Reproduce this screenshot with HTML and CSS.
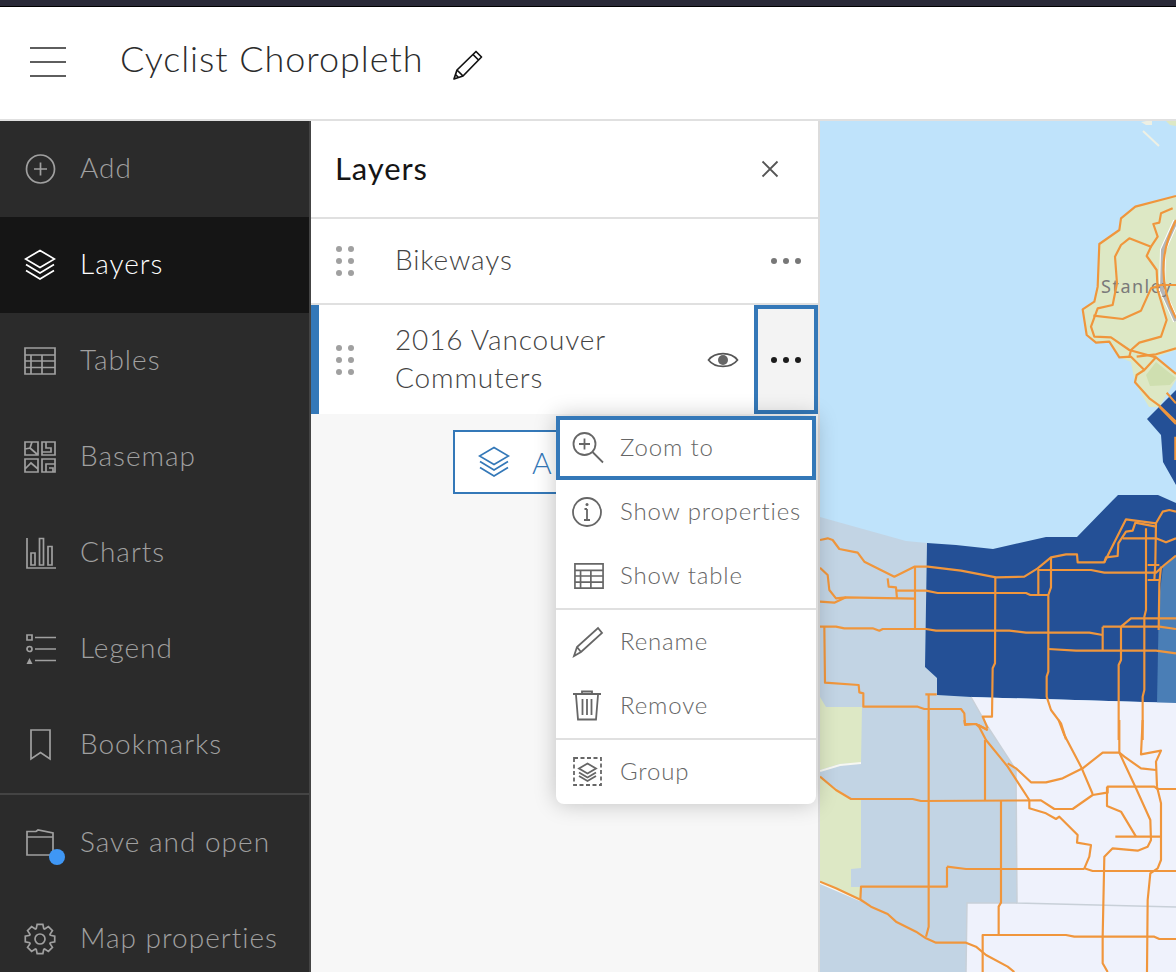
FILE: index.html
```html
<!DOCTYPE html>
<html lang="en">
<head>
<meta charset="utf-8">
<title>Cyclist Choropleth</title>
<link rel="stylesheet" href="styles.css">
</head>
<body>
<svg class="defs" width="0" height="0">
  <symbol id="i-layers" viewBox="0 0 32 32">
    <path d="M16 1.500 30.500 10 16 18.500 1.500 10Z"/>
    <path d="M2 15.500 16 24 30 15.500"/>
    <path d="M2 21.500 16 30 30 21.500"/>
  </symbol>
  <symbol id="i-table" viewBox="0 0 32 32">
    <path d="M1 3h30v26H1zM1 10h30M1 16h30M1 22.500h30M7 10v19M18 10v19"/>
  </symbol>
</svg>
<div class="topbar"></div>
<header class="header">
  <button class="menu-btn" aria-label="Menu"><span></span><span></span><span></span></button>
  <h1 class="title">Cyclist Choropleth</h1>
  <svg class="pencil" viewBox="0 0 32 32"><path d="M2 30 5 21 24 2.500 29.500 8 11 27ZM5 21 11 27M21 5.500 26.500 11M3.500 25.500 6.500 28.500"/></svg>
</header>
<div class="main">
  <nav class="sidebar">
    <a class="nav-item"><svg class="ico" viewBox="0 0 32 32"><circle cx="16.500" cy="16" r="14"/><path d="M16.500 9.500v13M10 16h13"/></svg><span class="nav-text">Add</span></a>
    <a class="nav-item active"><svg class="ico"><use href="#i-layers"/></svg><span class="nav-text">Layers</span></a>
    <a class="nav-item"><svg class="ico"><use href="#i-table"/></svg><span class="nav-text">Tables</span></a>
    <a class="nav-item"><svg class="ico" viewBox="0 0 32 32"><path d="M1 1h13v13H1zM18 1h13v13H18zM1 18h13v13H1zM18 18h13v13H18zM1 8l5-1 2-6M6 7l8 7M22 1v6h5v4h-9M1 28l6-6 7 6M22 31v-8h9M25 27h4v4"/></svg><span class="nav-text">Basemap</span></a>
    <a class="nav-item"><svg class="ico" viewBox="0 0 32 32"><path d="M3 1v30h30M7 16h4v12H7zM15.500 1.500h4V28h-4zM24 9.500h4V28h-4z"/></svg><span class="nav-text">Charts</span></a>
    <a class="nav-item"><svg class="ico" viewBox="0 0 32 32"><path d="M11 4.500h21M11 16h21M11 27.500h21M3 2h5v5H3z"/><circle cx="5.500" cy="16" r="2.500"/><path class="solid" d="M5.500 25 8.500 31H2.500Z"/></svg><span class="nav-text">Legend</span></a>
    <a class="nav-item"><svg class="ico" viewBox="0 0 32 32"><path d="M7 1h19v29l-9.500-6.500L7 30Z"/></svg><span class="nav-text">Bookmarks</span></a>
    <a class="nav-item divided"><span class="ico-wrap"><svg class="ico" viewBox="0 0 32 32"><path d="M3 4.500 12 4.500 14 3 29 6V28H3ZM3 10H29"/></svg><i class="dot"></i></span><span class="nav-text">Save and open</span></a>
    <a class="nav-item"><svg class="ico" viewBox="0 0 32 32"><polygon points="26.34,12.24 30.72,13.14 30.72,18.86 26.34,19.76 25.97,20.65 28.44,24.39 24.39,28.44 20.65,25.97 19.76,26.34 18.86,30.72 13.14,30.72 12.24,26.34 11.35,25.97 7.61,28.44 3.56,24.39 6.03,20.65 5.66,19.76 1.28,18.86 1.28,13.14 5.66,12.24 6.03,11.35 3.56,7.61 7.61,3.56 11.35,6.03 12.24,5.66 13.14,1.28 18.86,1.28 19.76,5.66 20.65,6.03 24.39,3.56 28.44,7.61 25.97,11.35"/><circle cx="16" cy="16" r="5"/></svg><span class="nav-text">Map properties</span></a>
  </nav>
  <section class="panel">
    <div class="panel-head">
      <h2 class="panel-title">Layers</h2>
      <svg class="close" viewBox="0 0 18 18"><path d="M1.500 1.500l15 15M16.500 1.500l-15 15"/></svg>
    </div>
    <div class="row">
      <span class="grip"><i></i><i></i><i></i><i></i><i></i><i></i></span>
      <span class="row-label">Bikeways</span>
      <span class="more"><i></i><i></i><i></i></span>
    </div>
    <div class="row selected">
      <span class="grip"><i></i><i></i><i></i><i></i><i></i><i></i></span>
      <span class="row-label">2016 Vancouver<br>Commuters</span>
      <svg class="eye" viewBox="0 0 32 20"><path d="M1.500 10C8 1.500 24 1.500 30.500 10 24 18.500 8 18.500 1.500 10Z"/><circle class="solid" cx="16" cy="10" r="5"/></svg>
      <span class="more focused"><i></i><i></i><i></i></span>
    </div>
    <div class="panel-body">
      <button class="add-btn"><svg class="add-ico"><use href="#i-layers"/></svg><span>A</span></button>
    </div>
    <ul class="menu">
      <li class="menu-item focus"><svg class="ico" viewBox="0 0 32 32"><circle cx="12.500" cy="12" r="11"/><path d="M12.500 6.500v11M7 12h11M20.500 20 31 30.500"/></svg><span class="menu-text">Zoom to</span></li>
      <li class="menu-item"><svg class="ico" viewBox="0 0 32 32"><circle cx="15" cy="16" r="14"/><path d="M15 13v11M12 24h6M12.500 13H15"/><circle class="solid" cx="15" cy="8.500" r="1.500"/></svg><span class="menu-text">Show properties</span></li>
      <li class="menu-item"><svg class="ico ico-table"><use href="#i-table"/></svg><span class="menu-text">Show table</span></li>
      <li class="menu-item sep"><svg class="ico" viewBox="0 0 32 32"><path d="M2 30 5 21 26 2l4 5L9 26ZM5 21l4 5"/></svg><span class="menu-text">Rename</span></li>
      <li class="menu-item"><svg class="ico" viewBox="0 0 32 32"><path d="M1 4h28M10 3V1.500h10V3M4 5l2 24.500h18L26 5M10.500 9v16M15 9v16M19.500 9v16"/></svg><span class="menu-text">Remove</span></li>
      <li class="menu-item sep"><svg class="ico" viewBox="0 0 32 32"><path class="dash" d="M2 2h27v27H2z"/><path d="M15.500 7.500 24 12.500 15.500 17.500 7 12.500ZM7 16.500l8.500 5 8.500-5M7 20l8.500 5 8.500-5"/></svg><span class="menu-text">Group</span></li>
    </ul>
  </section>
  <div class="map">
    <svg class="map-svg" viewBox="820 121 356 851" preserveAspectRatio="none">
      <polygon class="land-blue" points="820,517 906,541 927,543 925,667 937,678 937,695 971,697 988,727 1016,770 1017,903 967,903 966,972 820,972"/>
      <polygon class="park" points="826,707 862,707 861,763 840,764 820,770 820,697"/>
      <polygon class="park" points="820,777 851,799 861,800 861,868 851,869 851,887 861,887 860,900 820,882"/>
      <polyline class="shore" points="820,771 840,765 861,763"/>
      <polyline class="shore" points="820,883 860,900"/>
      <polygon class="park" points="1099,244 1119,230 1121,218 1135,207 1176,196 1176,380 1159,407 1149,407 1135,383 1131,362 1119,357 1109,342 1096,343 1087,335 1083,309 1094,302 1098,287"/>
      <polygon class="park-dark" points="1146,375 1156,362 1176,378 1170,385 1150,386"/>
      <polygon class="water" points="1156,357 1176,350 1176,373"/>
      <polygon class="park" points="1165,120 1176,120 1176,126 1170,125"/>
      <polygon class="pale" points="1141,122 1152,120 1152,125 1146,125"/>
      <polyline class="pale-line" points="1143,131 1159,146"/>
      <polyline class="road-halo" points="1176,221 1163,250 1162,290 1176,321"/>
      <polyline class="road" points="1176,221 1163,250 1162,290 1176,321"/>
      <polygon class="dark" points="927,543 956,545 993,549 1046,537 1077,537 1113,500 1118,495 1158,495 1176,503 1176,703 971,697 937,695 937,678 925,667"/>
      <polygon class="dark" points="1147,419 1176,390 1176,485 1163,462 1161,435"/>
      <polygon class="mid" points="1163,567 1176,555 1176,703 1157,703 1159,600"/>
      <polygon class="pale-land" points="971,697 988,727 1016,770 1017,903 967,903 966,972 1176,972 1176,703"/>
      <polyline class="boundary" points="971,697 988,727 1016,770 1017,903 1176,907"/>
      <polyline class="boundary" points="1017,903 967,903 966,972"/>
      <text class="map-label" x="1101" y="293">Stanley</text>
      <g transform="translate(816 120) scale(.33333)" class="bike">
        <path d="M1080,228 958,260 915,295 910,330 850,372 845,500 835,545 800,568 812,645 840,668 880,665 910,712 945,710 985,750 1020,712 1080,762"/>
        <path d="M1070,265 1035,280 1030,308 1012,312 1025,350 1005,380 940,355 915,375 897,410 903,490 890,555 845,565 825,620 835,650 885,652 940,690 1020,712"/>
        <path d="M1005,380 992,408 1022,450 1025,510 1052,600 1035,650 970,668 945,690 940,710"/>
        <path d="M832,587 920,597 975,572 1005,505 1035,495 1080,495"/>
        <path d="M962,710 1020,703 1080,685"/>
        <path d="M985,750 962,765 957,787 1000,835 1030,857 1080,905"/>
        <path d="M1052,818 1080,850M1030,860 1080,912M1078,950V1020"/>
        <path d="M1080,300C1030,400 1030,500 1080,595"/>
      </g>
      <g transform="translate(816 500) scale(.33333)" class="bike">
        <path d="M12,120 35,115 50,120 70,147 125,158 145,185 235,230 295,200 335,200 435,212 540,232 625,230 665,205 705,172 750,163 783,163 785,187 865,187 930,58 1020,70 1040,35 1060,30 1080,35"/>
        <path d="M705,172V262L697,285V515L692,530V590L705,630 735,670 750,718"/>
        <path d="M665,210H825L865,218H1020L1045,195 1080,167"/>
        <path d="M667,210V283"/>
        <path d="M215,235 218,260 240,262 243,295"/>
        <path d="M243,272H330L365,279H630L643,285H697"/>
        <path d="M12,203 35,225 40,270 60,295 90,292 295,296"/>
        <path d="M12,305 55,308 90,292"/>
        <path d="M297,200V385"/>
        <path d="M12,380H60L85,385H170L190,392 200,387H330L360,392H580L630,398H820L860,405"/>
        <path d="M25,380 27,548 128,555 130,577 142,580V620H305L325,627H435L445,640 447,675 480,672 515,690"/>
        <path d="M328,583H362M338,583V720"/>
        <path d="M538,232 537,490 530,505 528,650H500L515,685"/>
        <path d="M697,447 780,452H1020L1080,460"/>
        <path d="M860,380V450M860,380H915L945,355H1080M915,380H1030L1080,387"/>
        <path d="M915,380V480L908,495V720"/>
        <path d="M990,85V330L985,350V570L980,590V720"/>
        <path d="M1020,70 1018,190 1015,240"/>
        <path d="M1035,200 1030,250 1028,390"/>
        <path d="M995,195H1030M995,240H1030"/>
        <path d="M865,187 870,172 905,168 907,130 930,95 950,92 958,68 1020,80"/>
        <path d="M920,115H1020L1050,127 1080,115"/>
      </g>
      <g transform="translate(816 720) scale(.33333)" class="bike">
        <path d="M338,0V620L330,650"/>
        <path d="M445,0 447,12H480L490,22 510,60 555,115 575,140 640,240"/>
        <path d="M487,15 515,30"/>
        <path d="M507,60V240"/>
        <path d="M575,130 600,145 645,187H690L740,175 800,145 860,98H910L925,110 975,145 1020,150"/>
        <path d="M728,0 745,45 795,140 830,222"/>
        <path d="M910,0V98L960,205 1003,300 1005,360 995,380 965,392 890,385 865,410 860,650V730L875,756"/>
        <path d="M980,0 975,103 1035,92 1020,125 1023,200 1035,250V420L1025,445 1003,460 995,540 993,756"/>
        <path d="M12,170 60,210 105,237H290L315,243 675,241 715,267H770L830,225 873,218H875V200H1015L1025,207H1080"/>
        <path d="M873,200V258L915,275 960,350"/>
        <path d="M898,350H1035"/>
        <path d="M640,240V265L690,280 720,297 730,290 785,345 783,368 825,375 820,410 805,445 830,453H1080"/>
        <path d="M555,243V548L548,560V642"/>
        <path d="M393,440V500H135L133,540"/>
        <path d="M393,440 450,447H805"/>
        <path d="M12,485 60,505 135,540 165,560 215,582 240,605 300,635 330,655 360,668H450L480,680 510,705 575,740 595,756"/>
        <path d="M500,756V645H750L775,650H1015L1030,657H1080"/>
      </g>
    </svg>
  </div>
</div>
</body>
</html>
```
FILE: styles.css
```css
* { box-sizing: border-box; }
html, body { margin: 0; height: 972px; overflow: hidden; }
body { font-family: "Lato", "Noto Sans", sans-serif; background: #fff; }
.defs { position: absolute; }
.topbar { height: 7px; background: #2a2a38; border-bottom: 1px solid #000; }
.header { height: 112px; background: #fff; display: flex; align-items: center; padding-left: 30px; }
.menu-btn { width: 36px; height: 30px; padding: 0; border: 0; background: none; display: flex; flex-direction: column; justify-content: space-between; margin: 0 54px 2px 0; flex: none; }
.menu-btn span { display: block; height: 2px; background: #5e5e5e; }
.title { margin: 0 0 10px; font-size: 36px; font-weight: 300; letter-spacing: .95px; color: #2c2c2c; line-height: 44px; }
.pencil { width: 32px; height: 32px; margin: 3px 0 0 29px; fill: none; stroke: #111; stroke-width: 1.7; stroke-linejoin: round; }
.main { display: flex; height: 853px; border-top: 2px solid #e0e0e0; }
.sidebar { width: 311px; flex: none; height: 851px; background: #2b2b2b; border-right: 2px solid #444; overflow: hidden; }
.nav-item { display: flex; align-items: center; height: 96px; padding-left: 24px; gap: 25px; color: #a0a0a0; font-size: 28px; font-weight: 300; letter-spacing: 1px; }
.nav-text { margin-left: -1px; padding-bottom: 4px; }
.nav-item.active { background: #151515; color: #fff; }
.nav-item.divided { height: 98px; border-top: 2px solid #444; }
.ico { width: 32px; height: 32px; flex: none; fill: none; stroke: currentColor; stroke-width: 1.7; }
.ico .solid { fill: currentColor; stroke: none; }
.ico .dash { stroke-dasharray: 4 2.500; }
.ico-wrap { position: relative; display: block; width: 32px; height: 32px; }
.dot { position: absolute; left: 25px; top: 22px; width: 16px; height: 16px; border-radius: 50%; background: #3f97f5; }
.panel { position: relative; width: 509px; flex: none; height: 851px; background: #f7f7f7; border-right: 2px solid #dcdcdc; }
.panel-head { height: 98px; background: #fff; border-bottom: 2px solid #e0e0e0; display: flex; align-items: center; justify-content: space-between; padding: 0 39px 0 24px; }
.panel-title { margin: 0 0 3px; font-size: 31px; font-weight: 400; letter-spacing: .9px; color: #151515; }
.close { width: 18px; height: 18px; fill: none; stroke: #555; stroke-width: 1.800; }
.row { display: flex; align-items: center; height: 86px; background: #fff; border-bottom: 2px solid #e0e0e0; padding-left: 25px; }
.row.selected { height: 109px; border-bottom: 0; border-left: 8px solid #3478b8; padding-left: 17px; align-items: stretch; background: #fff; }
.row.selected .grip { align-self: center; }
.row.selected .row-label { align-self: center; }
.grip { display: grid; grid-template-columns: 6px 6px; gap: 6px 6px; width: 18px; margin-right: 41px; flex: none; }
.grip i { width: 6px; height: 6px; border-radius: 50%; background: #a0a0a0; }
.row-label { flex: 1; font-size: 28px; font-weight: 300; line-height: 38px; letter-spacing: .85px; color: #444; padding-bottom: 4px; }
.more { display: flex; width: 64px; height: 100%; justify-content: center; align-items: center; gap: 6px; flex: none; }
.more i { width: 6px; height: 6px; border-radius: 50%; background: #777; }
.more.focused { border: 4px solid #3478b8; background: #f3f3f3; }
.more.focused i { background: #1b1b1b; }
.eye { align-self: center; width: 32px; height: 20px; margin-right: 15px; flex: none; fill: none; stroke: #555; stroke-width: 1.700; }
.eye .solid { fill: #666; stroke: none; }
.panel-body { padding: 16px 0 0 142px; }
.add-btn { display: flex; align-items: center; gap: 22px; width: 222px; height: 64px; padding: 0 0 0 23px; border: 2px solid #3478b8; background: #fff; color: #3478b8; font: 300 30px "Lato", sans-serif; text-align: left; white-space: nowrap; }
.add-ico { width: 32px; height: 32px; flex: none; fill: none; stroke: currentColor; stroke-width: 1.700; }
.menu { position: absolute; left: 245px; top: 295px; width: 260px; margin: 0; padding: 0; list-style: none; background: #fff; border-radius: 0 0 8px 8px; box-shadow: 0 0 22px rgba(0, 0, 0, .22); }
.menu-item { display: flex; align-items: center; gap: 16px; height: 64px; padding-left: 16px; color: #666; font-size: 24px; font-weight: 300; letter-spacing: .85px; }
.menu-text { padding-bottom: 3px; }
.menu-item.focus { border: 4px solid #3478b8; padding-left: 12px; }
.menu-item.sep { height: 66px; border-top: 2px solid #e0e0e0; }
.menu-item .ico { stroke-width: 1.800; }
.menu-item .ico-table { width: 30px; height: 30px; margin: 0 0 0 2px; }
.map { flex: 1; min-width: 0; height: 851px; background: #bfe3fb; }
.map-svg { display: block; width: 100%; height: 100%; }
.land-blue { fill: #c2d4e4; }
.park { fill: #dde8c5; }
.park-dark { fill: #cfdfb0; }
.water { fill: #bfe3fb; }
.pale { fill: #eef0e4; }
.pale-line { fill: none; stroke: #eef0e4; stroke-width: 2; }
.shore { fill: none; stroke: #f7f7f2; stroke-width: 2; }
.road-halo { fill: none; stroke: #fff; stroke-width: 6; }
.road { fill: none; stroke: #b5b5b5; stroke-width: 4; }
.dark { fill: #245096; }
.mid { fill: #4a7eb6; }
.pale-land { fill: #eff2fc; }
.boundary { fill: none; stroke: #c8d0d8; stroke-width: 1.500; }
.map-label { font: 18px "Noto Sans", sans-serif; letter-spacing: 1.500px; fill: #7a7a7a; }
.bike { fill: none; stroke: #f0963c; stroke-width: 6.500; stroke-linejoin: round; }
```
